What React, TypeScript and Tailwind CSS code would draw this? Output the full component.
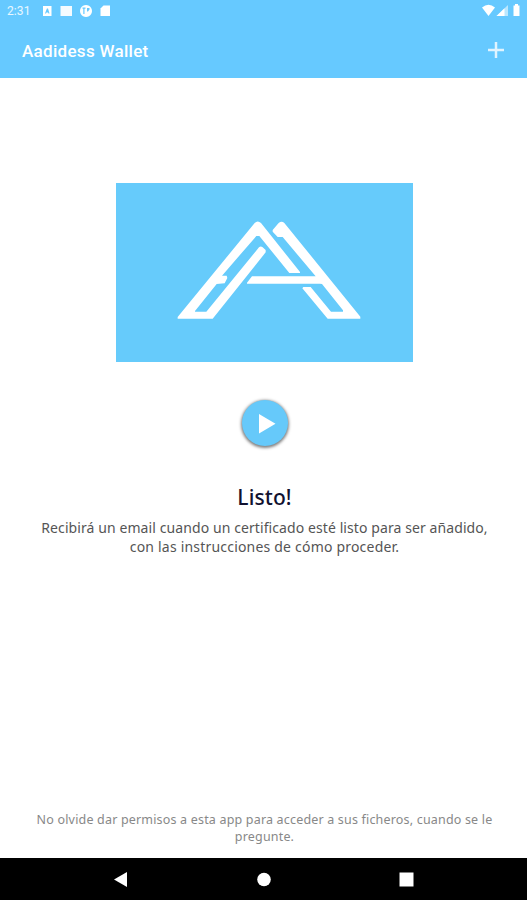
function StatusBar() {
  return (
    <div className="flex h-[22px] items-center justify-between pl-[7px] pr-[5px] text-white">
      <div className="flex items-center">
        <span className="w-[35px] text-[12px] leading-none tracking-[0.1px] text-white/85">2:31</span>
        <svg className="h-[22px] w-[70px]" viewBox="0 0 70 22" fill="currentColor">
          <path fillRule="evenodd" d="M1 6h8.500v10H1zM4.900 8.500 3 13.500h1l.5-1h1.500l.5 1h1l-1.500-5z" />
          <path d="M18.500 6h11.500v10H18.500z" opacity=".93" />
          <path fillRule="evenodd" d="M44 5a6 6 0 1 0 .01 0zM40.500 7.500h3v1.300h-1v5.200h-1.200v-5.200h-.8zM45 8h2.500v1.500L46 11.500h-1z" />
          <path d="M61.500 5.500h6.500v10.500h-9.500v-7.500z" />
        </svg>
      </div>
      <svg className="h-[22px] w-[40px]" viewBox="0 0 40 22" fill="currentColor">
        <path d="M0 7.500Q6.500 2 13 7.500L6.500 16z" />
        <path d="M14.500 16 26 5v11z" opacity=".55" />
        <path d="M14.500 16 22.500 8.300V16z" />
        <path d="M31.500 5.500h1.500v-1.500h3v1.500h1.500V16h-6z" />
      </svg>
    </div>
  );
}

function Header() {
  return (
    <header className="h-[78px] bg-[#66c9ff] font-[Roboto,sans-serif] text-white">
      <StatusBar />
      <div className="flex h-[56px] items-center justify-between pl-[22px] pr-[22px]">
        <h1 className="pt-[2px] text-[17px] font-medium leading-none tracking-[0.3px]">Aadidess Wallet</h1>
        <svg className="h-[18px] w-[18px]" viewBox="0 0 18 18" stroke="currentColor" strokeWidth="2.500">
          <path d="M9 1v16M1 9h16" opacity=".8" />
        </svg>
      </div>
    </header>
  );
}

function Logo() {
  return (
    <svg className="h-[179px] w-[297px] bg-[#66cbfb]" viewBox="-147 -66 891 537" fill="#fff">
      <path d="M38 341V336L269 54Q278 45 288 54L405 201V204H373L283 93H274L171 212H185L187 219L179 235L155 237L90 318V320H124L282 127Q287 122 292 126L302 135V142L143 341Z" />
      <path d="M246 236V233L261 214H452L353 96L338 96L323 80V75L341 54Q350 46 358 54L586 335V341H488L412 250L415 246H437L498 320H534V316L471 237L465 236Z" />
    </svg>
  );
}

function PlayButton() {
  return (
    <button className="flex h-[46px] w-[46px] items-center justify-center rounded-full bg-[#66c9fa] shadow-[0_1px_3px_1px_rgba(0,0,0,0.5)]">
      <svg className="h-[46px] w-[46px]" viewBox="0 0 46 46" fill="#fff">
        <path d="M17 14v19.500l16.500-9.700z" />
      </svg>
    </button>
  );
}

function NavBar() {
  return (
    <nav className="flex h-[42px] items-center bg-black">
      <svg className="h-[42px] w-full" viewBox="0 0 527 42" fill="#fff">
        <path d="M114 21.500 127 14v15z" />
        <circle cx="264" cy="21.500" r="6.800" />
        <path d="M399.500 14.500h14v14h-14z" />
      </svg>
    </nav>
  );
}

export default function App() {
  return (
    <div className="flex h-[900px] w-[527px] flex-col bg-white font-['Noto_Sans',sans-serif]">
      <Header />
      <main className="flex flex-1 flex-col items-center pl-[2px] pt-[105px] text-center">
        <Logo />
        <div className="mt-[38px] ml-px">
          <PlayButton />
        </div>
        <h2 className="mt-[37px] text-[21px] font-medium leading-[28px] tracking-[0.1px] text-[#111130]">Listo!</h2>
        <p className="mt-[7px] whitespace-nowrap text-[14px] leading-[19px] tracking-[0.09px] text-[#555]">
          Recibirá un email cuando un certificado esté listo para ser añadido,
          <br />
          <span className="tracking-[0.2px]">con las instrucciones de cómo proceder.</span>
        </p>
        <p className="mt-auto mb-[13px] whitespace-nowrap text-[12.500px] leading-[17px] tracking-[0.18px] text-[#888]">
          No olvide dar permisos a esta app para acceder a sus ficheros, cuando se le
          <br />
          pregunte.
        </p>
      </main>
      <NavBar />
    </div>
  );
}
